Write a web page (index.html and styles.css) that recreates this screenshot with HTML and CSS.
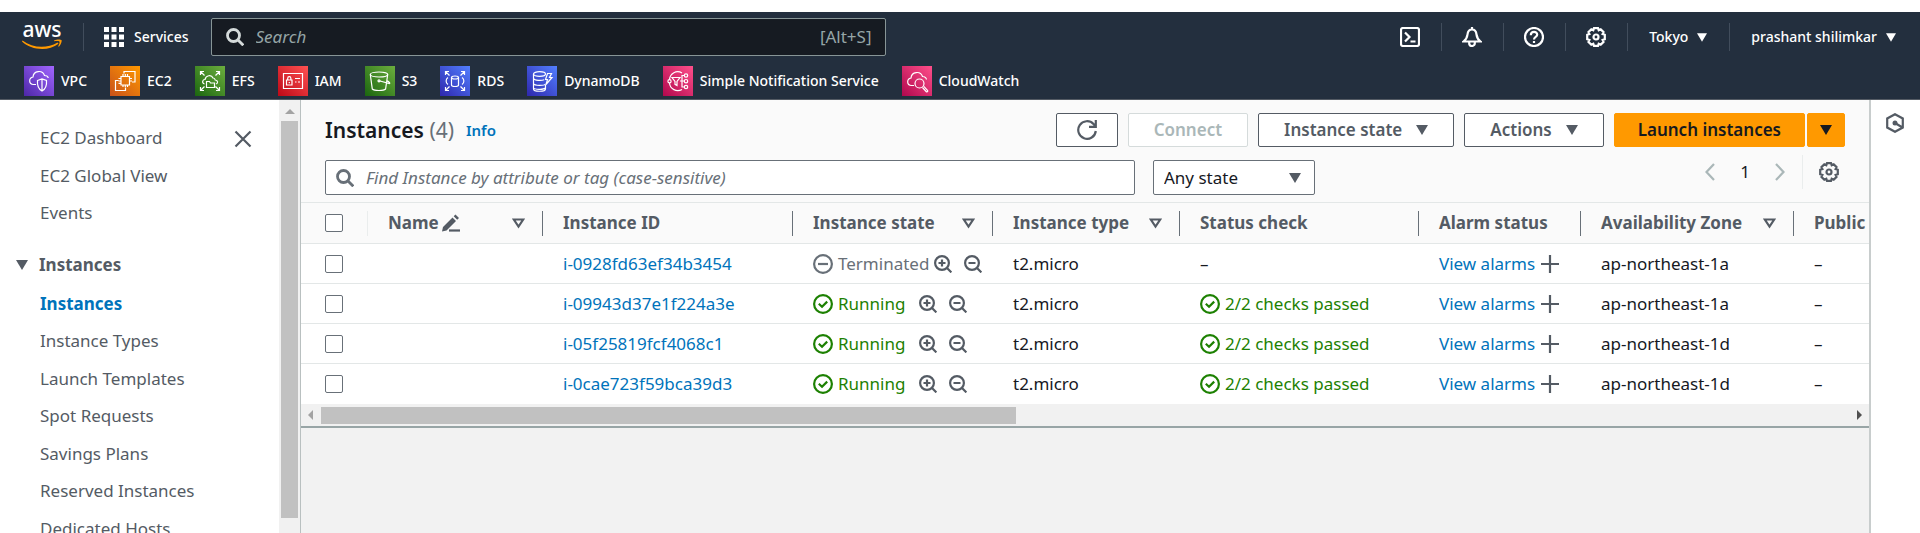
FILE: index.html
```html
<!DOCTYPE html>
<html lang="en">
<head>
<meta charset="utf-8">
<title>Instances | EC2</title>
<link rel="stylesheet" href="styles.css">
</head>
<body>
<svg class="defs" aria-hidden="true">
  <defs>
    <symbol id="search" viewBox="0 0 18 18"><circle cx="7.500" cy="7.500" r="6"/><path d="M12 12l5.300 5.300"/></symbol>
    <symbol id="zoom-in" viewBox="0 0 18 18"><circle cx="8" cy="8" r="6.900"/><path d="M13 13l4.400 4.400M8 4.500v7M4.500 8h7"/></symbol>
    <symbol id="zoom-out" viewBox="0 0 18 18"><circle cx="8" cy="8" r="6.900"/><path d="M13 13l4.400 4.400M4.500 8h7"/></symbol>
    <symbol id="check" viewBox="0 0 20 20"><circle cx="10" cy="10" r="8.900"/><path d="M5.800 9.800l3.200 3 5.200-5.200"/></symbol>
    <symbol id="minus" viewBox="0 0 20 20"><circle cx="10" cy="10" r="8.900"/><path d="M5 10h10"/></symbol>
    <symbol id="plus" viewBox="0 0 18 18"><path d="M9 0v18M0 9h18"/></symbol>
    <symbol id="sort" viewBox="0 0 13 11"><path d="M1.800 1.500h9.400L6.500 8.600z"/></symbol>
    <symbol id="caret" viewBox="0 0 12 10"><path d="M0 0h12L6 10z"/></symbol>
    <symbol id="gear" viewBox="0 0 20 20"><path d="M8 1.200h4l.7 2 2-.9 2.800 2.800-.9 2 2.200.7v4.400l-2.200.7.9 2-2.800 2.800-2-.9-.7 2H8l-.7-2-2 .9-2.800-2.800.9-2-2.200-.7V7.800l2.200-.7-.9-2 2.800-2.800 2 .9z"/><circle cx="10" cy="10" r="2.500"/></symbol>
  </defs>
</svg>

<header class="topbar">
  <div class="topbar-main">
    <a class="logo" href="#" aria-label="AWS home">
      <svg viewBox="0 0 40 26" width="40" height="26"><text x="20" y="13" text-anchor="middle" class="logo-text">aws</text><path class="smile" d="M.5 16.500c10 7.500 24 8.500 35 2l1 1.200C26 28 9 26 0 17.500z"/><path class="smile" d="M32 16.500c3-1.500 7-1.200 7.500-.4.6 1-.5 5-2.700 6.600l-.6-.4c1-2 1.700-4 1.300-4.600-.5-.7-3-.7-5.300-.5z"/></svg>
    </a>
    <button class="services" type="button">
      <svg viewBox="0 0 20 20" width="20" height="20"><path d="M0 0h5v5H0zM7.500 0h5v5h-5zM15 0h5v5h-5zM0 7.500h5v5H0zM7.500 7.500h5v5h-5zM15 7.500h5v5h-5zM0 15h5v5H0zM7.500 15h5v5h-5zM15 15h5v5h-5z" fill="#fff"/></svg>
      Services
    </button>
    <label class="global-search">
      <svg class="line heavy" width="18" height="18"><use href="#search"/></svg>
      <input type="search" placeholder="Search" aria-label="Search">
      <span>[Alt+S]</span>
    </label>
    <div class="tools">
      <button class="tool" type="button" aria-label="CloudShell"><svg class="line" viewBox="0 0 20 20" width="20" height="20"><rect x="1" y="1" width="18" height="18" rx="2"/><path d="M5 5.500l4.500 4.500L5 14.500M10.500 14.500h5"/></svg></button>
      <button class="tool" type="button" aria-label="Notifications"><svg class="line" viewBox="0 0 20 20" width="20" height="20"><path d="M10 0v2.500M1.500 14.500h17c-3-2.300-3.700-4.500-4-7C14.200 4.500 12.500 2.500 10 2.500S5.800 4.500 5.500 7.500c-.3 2.500-1 4.700-4 7zM7.200 15v1.200c0 3.700 5.600 3.700 5.600 0V15"/></svg></button>
      <button class="tool" type="button" aria-label="Help"><svg class="line" viewBox="0 0 20 20" width="20" height="20"><circle cx="10" cy="10" r="9"/><path d="M6.800 8.200c0-4.300 6.400-4.300 6.400-.4 0 2.200-3.200 2.200-3.200 4.700M10 14v2"/></svg></button>
      <button class="tool" type="button" aria-label="Settings"><svg class="line" width="20" height="20"><use href="#gear"/></svg></button>
      <button class="tool menu" type="button">Tokyo <svg class="solid" width="10" height="9"><use href="#caret"/></svg></button>
      <button class="tool menu" type="button">prashant shilimkar <svg class="solid" width="10" height="9"><use href="#caret"/></svg></button>
    </div>
  </div>
  <nav class="favorites" aria-label="Favorites">
    <a href="#"><svg class="tile purple" viewBox="0 0 30 30"><path d="M12 18.500H9.500c-5-.5-5-6.500-.5-7.500.5-6.500 9.500-7.500 11.500-1.500 2.500 0 3.500 1 3.800 2.500M13.500 14.500l4.500-1.500 4.500 1.500c.5 5.500-1 8.500-4.500 10.500-3.500-2-5-5-4.500-10.500zM18 13v12"/></svg>VPC</a>
    <a href="#"><svg class="tile orange" viewBox="0 0 30 30"><path d="M11 10.500h8.500V19H11zM13 8v2.500M15.300 8v2.500M17.500 8v2.500M13 19v2M15.300 19v2M17.500 19v2M8.500 12.500H11M8.500 15H11M8.500 17.300H11M19.500 12.500H22M19.500 15H22M14 7.500V5.500h11V16h-3M8.500 14.500h-3v10h10v-3"/></svg>EC2</a>
    <a href="#"><svg class="tile green" viewBox="0 0 30 30"><path d="M5.500 9V5.500H9M5.500 5.500l4 4M21 5.500h3.500V9M24.500 5.500l-4 4M5.500 21v3.500H9M5.500 24.500l4-4M21 24.500h3.500V21M24.500 24.500l-4-4M9.500 18c-3-1-2-4.500.5-4.500 1-4.500 6.500-5 8-1.500 1.500 0 2 .7 2.200 2 3 .3 3 3.500.8 4M11.500 21.500v-6h3l1 1.500h4v4.500z"/></svg>EFS</a>
    <a href="#"><svg class="tile red" viewBox="0 0 30 30"><path d="M5.500 7.500h19v15h-19zM8.500 14h5.500v5H8.500zM9.700 14v-1.500c0-2.500 3.200-2.500 3.200 0V14M11.300 16v1.300M17 12.500h5M17 16h1.500M20 16h2"/></svg>IAM</a>
    <a href="#"><svg class="tile green" viewBox="0 0 30 30"><ellipse cx="14" cy="8.500" rx="8.700" ry="2.500"/><path d="M5.300 8.500l2 14.500c2 2 11.300 2 13.300 0l2.100-14.500M15 15l9.500 2.500c.8-.5-.5-1.700-2.300-2.600"/><circle cx="14" cy="14.800" r="1"/></svg>S3</a>
    <a href="#"><svg class="tile blue" viewBox="0 0 30 30"><path d="M5.500 9V5.500H9M5.500 5.500l4 4M21 5.500h3.500V9M24.500 5.500l-4 4M5.500 21v3.500H9M5.500 24.500l4-4M21 24.500h3.500V21M24.500 24.500l-4-4M11.500 11.500v7.500c0 2 7 2 7 0v-7.500M8 11.500c-2.500 1.500-2.500 5.500 0 7M22 11.500c2.500 1.500 2.500 5.500 0 7"/><ellipse cx="15" cy="11.500" rx="3.500" ry="1.500"/></svg>RDS</a>
    <a href="#"><svg class="tile blue" viewBox="0 0 30 30"><ellipse cx="12.500" cy="8" rx="6" ry="2.300"/><path d="M6.500 8v15c0 3 12 3 12 0v-4M6.500 12.500c1 2 8 2.500 10.500 1.200M6.500 17.500c1 2.500 10.500 2.500 12 .5M6.500 22c1 1.500 10 2 12 0M20.500 7.500h4l-2 4h2.500l-6 7 1.500-5h-2z"/></svg>DynamoDB</a>
    <a href="#"><svg class="tile pink" viewBox="0 0 30 30"><path d="M19 7c-5.500-3.500-12 .5-12.500 6.500M6.500 17c.5 6 7 9.500 12.500 6.500M9 11.500h8l-3 4v4l-2-1.200v-2.800zM17 15h5M19 15V9.500h2.500M19 15v6h2.500"/><circle cx="6.500" cy="15.300" r="1.600"/><circle cx="23" cy="9.500" r="1.700"/><circle cx="23" cy="15.200" r="1.700"/><circle cx="23" cy="21" r="1.700"/></svg>Simple Notification Service</a>
    <a href="#"><svg class="tile pink" viewBox="0 0 30 30"><path d="M12 19.500H9.500c-5-.5-5-6.500-.5-7.500.5-6.500 9.500-7.500 11.500-1.500 2.500 0 3.700 1.200 4 3M20.500 21.500l3.800 4.200c1 .7 2-.3 1.200-1.300l-3.700-4"/><circle cx="17.500" cy="17.500" r="4.500"/></svg>CloudWatch</a>
  </nav>
</header>

<div class="shell">
  <aside class="sidebar">
    <nav class="side-nav" aria-label="EC2">
      <ul>
        <li><a href="#">EC2 Dashboard</a></li>
        <li><a href="#">EC2 Global View</a></li>
        <li><a href="#">Events</a></li>
      </ul>
      <button class="group" type="button" aria-expanded="true"><svg class="solid" width="12" height="10"><use href="#caret"/></svg>Instances</button>
      <ul class="nested">
        <li><a class="current" href="#" aria-current="page">Instances</a></li>
        <li><a href="#">Instance Types</a></li>
        <li><a href="#">Launch Templates</a></li>
        <li><a href="#">Spot Requests</a></li>
        <li><a href="#">Savings Plans</a></li>
        <li><a href="#">Reserved Instances</a></li>
        <li><a href="#">Dedicated Hosts</a></li>
      </ul>
    </nav>
    <button class="close" type="button" aria-label="Close navigation"><svg class="line" viewBox="0 0 18 18" width="18" height="18"><path d="M1.500 1.500l15 15M16.500 1.500l-15 15"/></svg></button>
    <div class="scroll-y"><svg viewBox="0 0 10 5" width="10" height="5"><path d="M0 5h10L5 0z"/></svg><div class="thumb-y"></div></div>
  </aside>

  <main class="content">
    <section class="panel">
      <div class="panel-head">
        <h1>Instances <span>(4)</span></h1>
        <a class="info" href="#">Info</a>
        <div class="actions">
          <button class="btn icon-btn" type="button" aria-label="Refresh"><svg class="line" viewBox="0 0 20 20" width="20" height="20"><path d="M18.800 11A8.800 8.800 0 1 1 16.500 4L18.500 6.200M18.800 0v6.800H12"/></svg></button>
          <button class="btn" type="button" disabled>Connect</button>
          <button class="btn" type="button">Instance state <svg class="solid" width="12" height="10"><use href="#caret"/></svg></button>
          <button class="btn" type="button">Actions <svg class="solid" width="12" height="10"><use href="#caret"/></svg></button>
          <div class="split">
            <button class="btn primary" type="button">Launch instances</button>
            <button class="btn primary more" type="button" aria-label="More launch options"><svg class="solid" width="12" height="10"><use href="#caret"/></svg></button>
          </div>
        </div>
      </div>
      <div class="filters">
        <label class="find">
          <svg class="line heavy" width="18" height="18"><use href="#search"/></svg>
          <input type="search" placeholder="Find Instance by attribute or tag (case-sensitive)" aria-label="Find Instance">
        </label>
        <div class="state-select">
          <select aria-label="Instance state filter"><option>Any state</option></select>
          <svg class="solid" width="12" height="10"><use href="#caret"/></svg>
        </div>
        <div class="pager">
          <button type="button" aria-label="Previous page"><svg class="line arrow" viewBox="0 0 10 18" width="10" height="18"><path d="M9 1L1.500 9 9 17"/></svg></button>
          <span>1</span>
          <button type="button" aria-label="Next page"><svg class="line arrow" viewBox="0 0 10 18" width="10" height="18"><path d="M1 1l7.500 8L1 17"/></svg></button>
          <button class="prefs" type="button" aria-label="Preferences"><svg class="line" width="20" height="20"><use href="#gear"/></svg></button>
        </div>
      </div>
      <div class="table-wrap">
        <table>
          <colgroup><col class="c-pick"><col class="c-name"><col class="c-id"><col class="c-state"><col class="c-type"><col class="c-check"><col class="c-alarm"><col class="c-zone"><col class="c-ip"></colgroup>
          <thead>
            <tr>
              <th><input type="checkbox" aria-label="Select all"></th>
              <th><div class="th"><span class="editable">Name <svg class="line" viewBox="0 0 18 18" width="18" height="18"><path d="M7 16.500h11"/><path class="nib" d="M0 17.500l1-4.500L10.500 3.500l3.500 3.500L4.500 16.500zM11.700 2.300L13.500.5 17 4l-1.800 1.800z"/></svg></span><svg class="line sort" width="13" height="11"><use href="#sort"/></svg></div></th>
              <th><div class="th">Instance ID</div></th>
              <th><div class="th">Instance state<svg class="line sort" width="13" height="11"><use href="#sort"/></svg></div></th>
              <th><div class="th">Instance type<svg class="line sort" width="13" height="11"><use href="#sort"/></svg></div></th>
              <th><div class="th">Status check</div></th>
              <th><div class="th">Alarm status</div></th>
              <th><div class="th">Availability Zone<svg class="line sort" width="13" height="11"><use href="#sort"/></svg></div></th>
              <th><div class="th">Public</div></th>
            </tr>
          </thead>
          <tbody>
            <tr>
              <td><input type="checkbox" aria-label="Select i-0928fd63ef34b3454"></td><td></td>
              <td><a href="#">i-0928fd63ef34b3454</a></td>
              <td><div class="state off"><span class="status"><svg class="line" width="20" height="20"><use href="#minus"/></svg>Terminated</span><button type="button" aria-label="Include"><svg class="line" width="18" height="18"><use href="#zoom-in"/></svg></button><button type="button" aria-label="Exclude"><svg class="line" width="18" height="18"><use href="#zoom-out"/></svg></button></div></td>
              <td>t2.micro</td><td>–</td>
              <td><div class="alarm"><a href="#">View alarms</a><svg class="line" width="18" height="18"><use href="#plus"/></svg></div></td>
              <td>ap-northeast-1a</td><td>–</td>
            </tr>
            <tr>
              <td><input type="checkbox" aria-label="Select i-09943d37e1f224a3e"></td><td></td>
              <td><a href="#">i-09943d37e1f224a3e</a></td>
              <td><div class="state"><span class="status ok"><svg class="line" width="20" height="20"><use href="#check"/></svg>Running</span><button type="button" aria-label="Include"><svg class="line" width="18" height="18"><use href="#zoom-in"/></svg></button><button type="button" aria-label="Exclude"><svg class="line" width="18" height="18"><use href="#zoom-out"/></svg></button></div></td>
              <td>t2.micro</td>
              <td><span class="status ok"><svg class="line" width="20" height="20"><use href="#check"/></svg>2/2 checks passed</span></td>
              <td><div class="alarm"><a href="#">View alarms</a><svg class="line" width="18" height="18"><use href="#plus"/></svg></div></td>
              <td>ap-northeast-1a</td><td>–</td>
            </tr>
            <tr>
              <td><input type="checkbox" aria-label="Select i-05f25819fcf4068c1"></td><td></td>
              <td><a href="#">i-05f25819fcf4068c1</a></td>
              <td><div class="state"><span class="status ok"><svg class="line" width="20" height="20"><use href="#check"/></svg>Running</span><button type="button" aria-label="Include"><svg class="line" width="18" height="18"><use href="#zoom-in"/></svg></button><button type="button" aria-label="Exclude"><svg class="line" width="18" height="18"><use href="#zoom-out"/></svg></button></div></td>
              <td>t2.micro</td>
              <td><span class="status ok"><svg class="line" width="20" height="20"><use href="#check"/></svg>2/2 checks passed</span></td>
              <td><div class="alarm"><a href="#">View alarms</a><svg class="line" width="18" height="18"><use href="#plus"/></svg></div></td>
              <td>ap-northeast-1d</td><td>–</td>
            </tr>
            <tr>
              <td><input type="checkbox" aria-label="Select i-0cae723f59bca39d3"></td><td></td>
              <td><a href="#">i-0cae723f59bca39d3</a></td>
              <td><div class="state"><span class="status ok"><svg class="line" width="20" height="20"><use href="#check"/></svg>Running</span><button type="button" aria-label="Include"><svg class="line" width="18" height="18"><use href="#zoom-in"/></svg></button><button type="button" aria-label="Exclude"><svg class="line" width="18" height="18"><use href="#zoom-out"/></svg></button></div></td>
              <td>t2.micro</td>
              <td><span class="status ok"><svg class="line" width="20" height="20"><use href="#check"/></svg>2/2 checks passed</span></td>
              <td><div class="alarm"><a href="#">View alarms</a><svg class="line" width="18" height="18"><use href="#plus"/></svg></div></td>
              <td>ap-northeast-1d</td><td>–</td>
            </tr>
          </tbody>
        </table>
      </div>
      <div class="scroll-x"><svg viewBox="0 0 5 10" width="5" height="10"><path d="M5 0v10L0 5z" fill="#a3a3a3"/></svg><div class="rail"><div class="thumb-x"></div></div><svg viewBox="0 0 5 10" width="5" height="10"><path d="M0 0v10l5-5z" fill="#505050"/></svg></div>
    </section>
  </main>

  <aside class="help">
    <button type="button" aria-label="Open tools"><svg class="line" viewBox="0 0 18 20" width="18" height="20"><path d="M9 1.200L16.800 5.500v9L9 18.800 1.200 14.500v-9zM9 10l7.500 4.500"/><circle class="dot" cx="9" cy="10" r="2.500"/></svg></button>
  </aside>
</div>
</body>
</html>
```

FILE: styles.css
```css
* { box-sizing: border-box; }

body {
  margin: 0;
  height: 100vh;
  padding-top: 12px;
  display: flex;
  flex-direction: column;
  overflow: hidden;
  background: #fff;
  color: #16191f;
  font: 17px/24px "Noto Sans", sans-serif;
}

a { color: #0073bb; text-decoration: none; }
svg { flex: none; display: block; }
button, input, select { font: inherit; color: inherit; }
button { margin: 0; padding: 0; border: 0; background: none; display: flex; align-items: center; white-space: nowrap; }
ul { list-style: none; margin: 0; padding: 0; }

.defs { position: absolute; width: 0; height: 0; }
.line { fill: none; stroke: currentColor; stroke-width: 2.2; }
.heavy { stroke-width: 2.8; }
.solid { fill: currentColor; }

/* Top navigation */
.topbar {
  flex: none;
  height: 88px;
  background: #232f3e;
  border-bottom: 1px solid #545b64;
  color: #fff;
  font-size: 14px;
  font-weight: 500;
}
.topbar-main { display: flex; align-items: center; height: 50px; padding: 0 24px 0 22px; }
.logo { padding-right: 21px; }
.logo svg { overflow: visible; }
.logo-text { font: 500 21px "Noto Sans", sans-serif; fill: #fff; }
.smile { fill: #f90; }
.services {
  gap: 10px;
  height: 28px;
  padding: 0 22px 0 20px;
  border-left: 1px solid #414d5c;
}
.global-search {
  flex: 0 1 675px;
  display: flex;
  align-items: center;
  gap: 12px;
  height: 38px;
  padding: 0 13px 0 14px;
  background: #161b22;
  border: 1px solid #879596;
  border-radius: 2px;
  color: #d5dbdb;
  font-size: 17px;
  font-weight: 400;
}
.global-search input { flex: 1; min-width: 0; border: 0; padding: 0; background: none; outline: 0; }
.global-search input::placeholder { color: #95a5a6; font-style: italic; opacity: 1; }
.global-search span { color: #95a5a6; }
.tools { display: flex; margin-left: auto; }
.tool { gap: 9px; height: 28px; padding: 0 21px 0 20px; border-left: 1px solid #414d5c; }
.menu { padding: 0 22px 0 21px; }
.tool:first-child { border-left: 0; }
.tool:last-child { padding-right: 0; }

.favorites { display: flex; align-items: center; gap: 23px; height: 37px; padding: 4px 24px 3px; }
.favorites a { display: flex; align-items: center; gap: 7px; color: #fff; }
.tile { width: 30px; height: 30px; fill: none; stroke: #fff; stroke-width: 1.2; }
.purple { background: linear-gradient(45deg, #4d27a8, #a166ff); }
.orange { background: linear-gradient(45deg, #c8511b, #f90); }
.green { background: linear-gradient(45deg, #1b660f, #6cae3e); }
.red { background: linear-gradient(45deg, #bd0816, #ff5252); }
.blue { background: linear-gradient(45deg, #2e27ad, #527fff); }
.pink { background: linear-gradient(45deg, #b0084d, #ff4f8b); }

/* Page shell */
.shell { flex: 1; min-height: 0; display: flex; }

.sidebar {
  flex: none;
  display: flex;
  width: 301px;
  border-right: 1px solid #b9c0c0;
  color: #545b64;
}
.side-nav { flex: 1; overflow: hidden; padding-top: 19px; }
.side-nav ul { display: grid; grid-auto-rows: 38px 37px; align-items: center; padding-left: 40px; }
.side-nav .nested { grid-auto-rows: 37px 38px; }
.side-nav a { color: inherit; }
.side-nav .current { color: #0073bb; font-weight: 700; }
.group { gap: 11px; height: 38px; margin: 14px 0 1px; padding-left: 16px; font-weight: 700; }
.close { align-self: flex-start; height: 38px; margin-top: 20px; margin-right: 27px; }
.scroll-y { width: 21px; padding: 9px 2px 0; background: #f1f1f1; fill: #a3a3a3; }
.scroll-y svg { margin: 0 auto 7px; }
.thumb-y { height: 397px; background: #c1c1c1; }

.content { flex: 1; min-width: 0; background: #f2f2f2; }
.panel { background: #fafafa; border-bottom: 2px solid #98a5a6; }
.panel-head { display: flex; align-items: center; padding: 13px 24px 0; }
h1 { margin: 0; font-size: 21px; font-weight: 600; line-height: 32px; }
h1 span { color: #687078; font-weight: 400; }
.info { margin-left: 12px; font-size: 15px; font-weight: 600; }
.actions { display: flex; gap: 10px; margin-left: auto; }
.btn {
  gap: 14px;
  height: 34px;
  padding: 0 25px;
  border: 1px solid #545b64;
  border-radius: 2px;
  background: #fff;
  color: #545b64;
  font-weight: 600;
}
.btn:disabled { border-color: #d5dbdb; color: #aab7b8; }
.icon-btn { padding: 0 20px; }
.split { display: flex; gap: 2px; }
.primary { padding: 0 23px; border-color: #f90; background: #f90; color: #16191f; }
.more { padding: 0 12px; }

.filters { display: flex; align-items: center; padding: 13px 24px 7px; }
.find {
  flex: 0 1 810px;
  display: flex;
  align-items: center;
  gap: 12px;
  height: 35px;
  padding: 0 10px;
  border: 1px solid #687078;
  border-radius: 2px;
  background: #fff;
  color: #687078;
}
.find input { flex: 1; min-width: 0; padding: 0; border: 0; outline: 0; background: none; }
.find input::placeholder { color: #687078; font-style: italic; opacity: 1; }
.state-select { display: grid; align-items: center; margin-left: 18px; color: #545b64; }
.state-select > * { grid-area: 1 / 1; }
.state-select svg { justify-self: end; margin-right: 14px; pointer-events: none; }
.state-select select {
  appearance: none;
  width: 162px;
  height: 35px;
  padding: 0 10px;
  border: 1px solid #687078;
  border-radius: 2px;
  background: #fff;
  color: #16191f;
}
.pager { display: flex; align-items: center; align-self: flex-start; gap: 25px; height: 24px; margin-left: auto; padding-right: 6px; }
.arrow { color: #aab7b8; }
.prefs { height: 34px; margin-left: -8px; padding-left: 16px; border-left: 1px solid #eaeded; color: #545b64; }

/* Instances table */
.table-wrap { overflow: hidden; }
table { width: 1800px; table-layout: fixed; border-collapse: separate; border-spacing: 0; background: #fff; }
.c-pick { width: 66px; }
.c-name { width: 175px; }
.c-id { width: 250px; }
.c-state { width: 200px; }
.c-type { width: 187px; }
.c-check { width: 239px; }
.c-alarm { width: 162px; }
.c-zone { width: 213px; }
th, td { padding: 0 0 0 21px; border-top: 1px solid #e3e7e7; text-align: left; white-space: nowrap; }
th:first-child, td:first-child { padding-left: 24px; }
th { height: 41px; padding-left: 0; background: #fafafa; color: #545b64; font-weight: 700; }
td { height: 40px; }
tr:last-child td { height: 41px; }
.th { display: flex; align-items: center; justify-content: space-between; height: 25px; padding: 0 17px 0 20px; border-left: 1px solid #687078; }
th:nth-child(2) .th { border-left-color: #eaeded; }
.editable { display: flex; align-items: center; gap: 3px; }
.nib { fill: currentColor; stroke: none; }
input[type="checkbox"] {
  appearance: none;
  display: block;
  width: 18px;
  height: 18px;
  margin: 0;
  border: 1px solid #687078;
  border-radius: 2px;
  background: #fff;
}
.status { display: flex; align-items: center; gap: 5px; }
.ok { color: #1d8102; }
.state { display: flex; align-items: center; gap: 12px; color: #545b64; }
.state .ok { margin-right: 2px; }
.off { color: #687078; }
.off .status { margin-right: -7px; }
.state button { color: #545b64; }
.alarm { display: flex; align-items: center; gap: 6px; color: #545b64; }

.scroll-x { display: flex; align-items: center; gap: 8px; height: 22px; padding: 0 7px; background: #f1f1f1; }
.rail { flex: 1; }
.thumb-x { width: 45.5%; height: 17px; background: #c1c1c1; }

.help { flex: none; width: 51px; padding: 13px 0 0 15px; border-left: 2px solid #c8cdcd; color: #545b64; }
.dot { fill: currentColor; stroke: none; }
```
